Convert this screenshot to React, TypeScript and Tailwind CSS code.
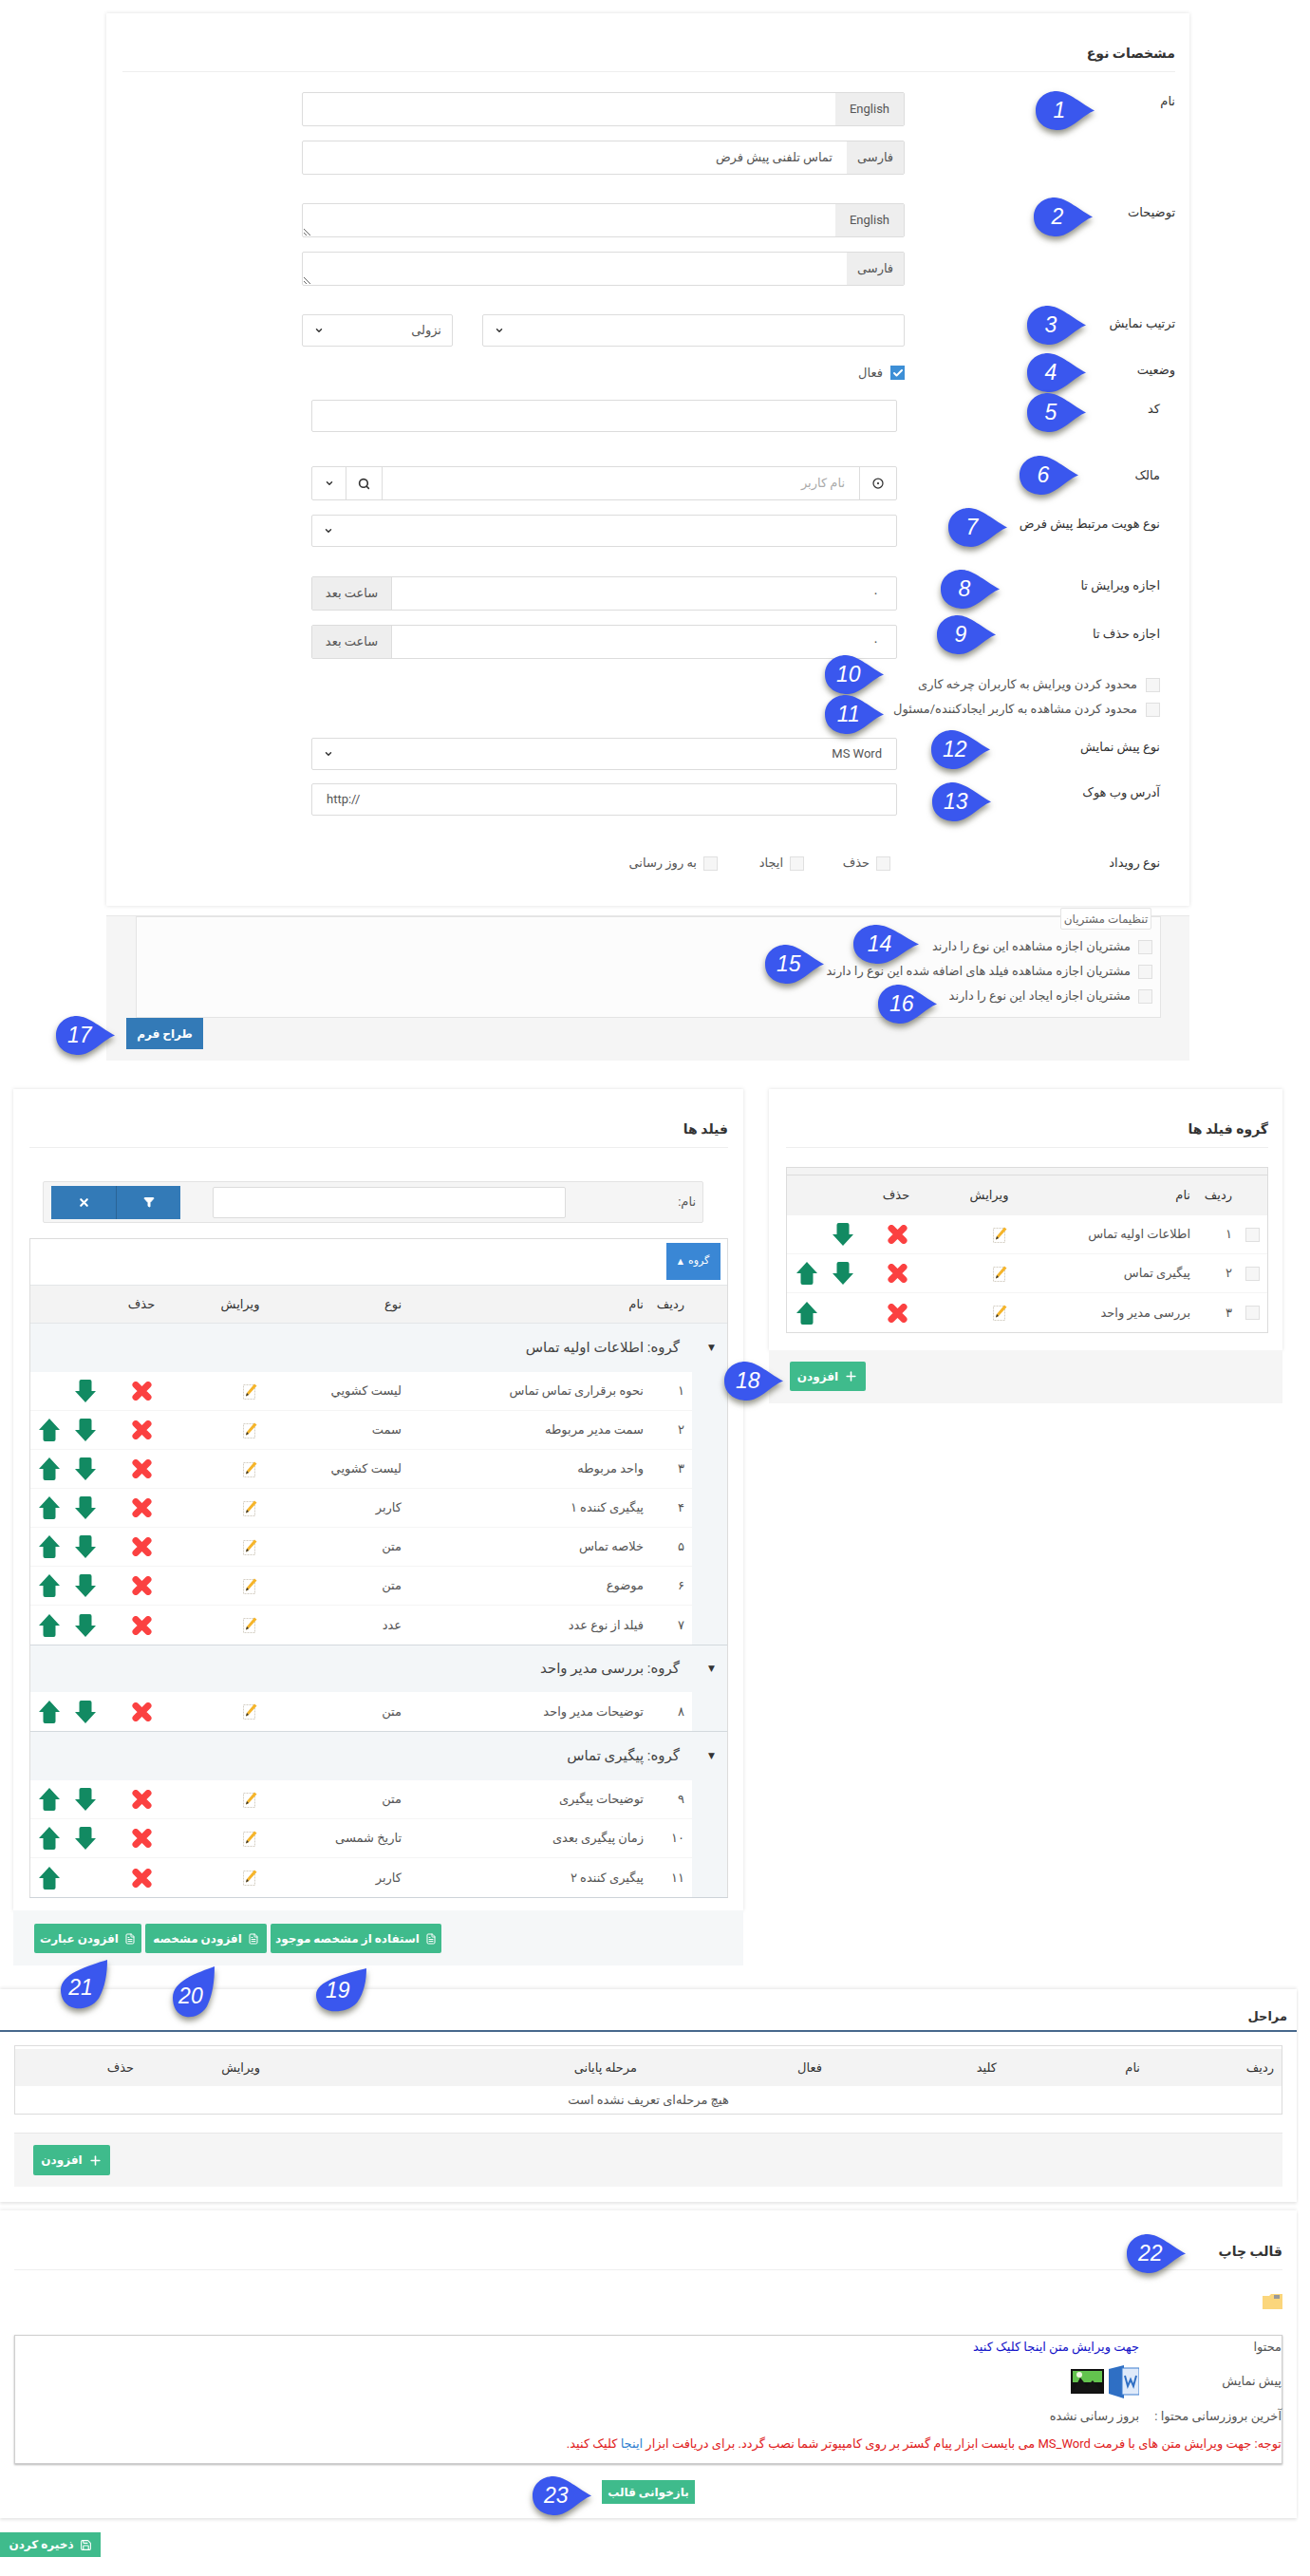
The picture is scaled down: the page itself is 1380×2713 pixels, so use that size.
import type { ReactNode } from "react";
import { ChevronDown, Search, CircleDot, Filter, X, Plus, Save, FileText, Check } from "lucide-react";

const FONT = "font-['Roboto','Noto_Sans','DejaVu_Sans',sans-serif]";

// numbered callouts, placed on top of the screenshot like annotations
const CALLOUTS: { n: number; x: number; y: number; up?: boolean; w?: number; h?: number }[] = [
  { n: 1, x: 1091, y: 96 },
  { n: 2, x: 1089, y: 208 },
  { n: 3, x: 1082, y: 322 },
  { n: 4, x: 1082, y: 372 },
  { n: 5, x: 1082, y: 414 },
  { n: 6, x: 1074, y: 480 },
  { n: 7, x: 999, y: 535 },
  { n: 8, x: 991, y: 600 },
  { n: 9, x: 987, y: 648 },
  { n: 10, x: 869, y: 690 },
  { n: 11, x: 869, y: 732 },
  { n: 12, x: 981, y: 769 },
  { n: 13, x: 982, y: 824 },
  { n: 14, x: 899, y: 974, w: 69 },
  { n: 15, x: 806, y: 995 },
  { n: 16, x: 925, y: 1037 },
  { n: 17, x: 59, y: 1070 },
  { n: 18, x: 763, y: 1434 },
  { n: 19, x: 333, y: 2073, up: true, w: 53, h: 46 },
  { n: 20, x: 182, y: 2071, up: true, w: 44, h: 54 },
  { n: 21, x: 64, y: 2064, up: true, w: 49, h: 52 },
  { n: 22, x: 1187, y: 2353 },
  { n: 23, x: 561, y: 2608 },
];

function Callout({ n, x, y, up, w, h }: { n: number; x: number; y: number; up?: boolean; w?: number; h?: number }) {
  if (up) {
    return (
      <div className="absolute" style={{ left: x, top: y, width: w, height: h }}>
        <svg viewBox="0 0 44 54" preserveAspectRatio="none" className="absolute inset-0 h-full w-full overflow-visible drop-shadow-[0_4px_3px_rgba(60,60,40,0.55)]">
          <path d="M44 0 C44 15 42 30 36 42 C30 52 20 54 14 53 C4 51 0 42 0 33 C0 24 6 18 14 13 C24 7 36 3 44 0 Z" fill="#3a57ee" />
        </svg>
        <span className="absolute bottom-[9px] left-0 w-[86%] text-center font-['Liberation_Sans',sans-serif] text-[23px] italic leading-[28px] text-white">{n}</span>
      </div>
    );
  }
  return (
    <div className="absolute h-[41px]" style={{ left: x, top: y, width: w ?? 62 }}>
      <svg viewBox="0 0 62 40" preserveAspectRatio="none" className="absolute inset-0 h-full w-full overflow-visible drop-shadow-[0_4px_3px_rgba(60,60,40,0.55)]">
        <path d="M22 0 C34 0 50 14 62 20 C50 24 38 40 24 40 C10 40 0 32 0 20 C0 8 10 0 22 0 Z" fill="#3a57ee" />
      </svg>
      <span className="absolute left-0 top-[6px] w-[80%] text-center font-['Liberation_Sans',sans-serif] text-[23px] italic leading-[28px] text-white">{n}</span>
    </div>
  );
}

function Box({ className = "", children }: { className?: string; children?: ReactNode }) {
  return <div className={`border border-[#dcdcdc] bg-white ${className}`}>{children}</div>;
}

function LangInput({ lang, value, wide }: { lang: string; value?: string; wide?: boolean }) {
  return (
    <Box className="flex h-[36px] w-full items-stretch rounded-[2px]">
      <div className={`flex items-center justify-center bg-[#eeeeee] text-[13px] text-[#555] ${wide ? "w-[72px]" : "w-[60px]"}`}>{lang}</div>
      <div className="flex flex-1 items-center px-[15px] text-[13px] text-[#555]">{value}</div>
    </Box>
  );
}

function LangArea({ lang, wide }: { lang: string; wide?: boolean }) {
  return (
    <Box className="flex h-[36px] w-full items-stretch rounded-[2px]">
      <div className={`flex items-center justify-center bg-[#eeeeee] text-[13px] text-[#555] ${wide ? "w-[72px]" : "w-[60px]"}`}>{lang}</div>
      <textarea className="h-full flex-1 outline-none" />
    </Box>
  );
}

function SelectBox({ value, narrow }: { value?: string; narrow?: boolean }) {
  return (
    <Box className={`flex h-[34px] items-center justify-between rounded-[2px] pl-[12px] text-[13px] text-[#555] ${narrow ? "w-[159px] pr-[11px]" : "pr-[15px]"}`}>
      <span>{value}</span>
      <ChevronDown size={10} strokeWidth={3.5} className="text-[#333]" />
    </Box>
  );
}

function Row({ label, labelW, fieldW, className = "", children }: { label: string; labelW: number; fieldW: number; className?: string; children: ReactNode }) {
  return (
    <div className={`flex ${className}`}>
      <div className="h-[20px] shrink-0 text-[13px] leading-[20px] text-[#333]" style={{ width: labelW }}>{label}</div>
      <div className="shrink-0" style={{ width: fieldW }}>{children}</div>
    </div>
  );
}

function Tick({ checked }: { checked?: boolean }) {
  if (checked) {
    return (
      <span className="flex h-[15px] w-[15px] shrink-0 items-center justify-center bg-[#3d8fd6]">
        <Check size={12} strokeWidth={4} className="text-white" />
      </span>
    );
  }
  return <span className="block h-[15px] w-[15px] shrink-0 border border-[#e0e0e0] bg-[#f6f6f6]" />;
}

function HourInput() {
  return (
    <Box className="flex h-[36px] items-stretch rounded-[2px]">
      <div className="flex-1 px-[18px] text-[13px] leading-[34px] text-[#555]">۰</div>
      <div className="flex w-[84px] items-center justify-center border-r border-[#ddd] bg-[#eeeeee] text-[13px] text-[#555]">ساعت بعد</div>
    </Box>
  );
}

function PanelTitle({ title }: { title: string }) {
  return (
    <div className="flex h-[62px] items-end border-b border-[#eeeeee] pb-[8px] text-[14px] font-bold leading-[22px] text-[#333]">{title}</div>
  );
}

function GreenBtn({ className = "", children }: { className?: string; children: ReactNode }) {
  return (
    <div className={`flex items-center justify-center gap-[6px] rounded-[2px] bg-[#3fbb8c] text-[12px] font-bold text-white ${className}`}>{children}</div>
  );
}

function ArrowUp() {
  return (
    <svg viewBox="0 0 22 24" className="block h-[24px] w-[22px]">
      <path d="M11 0 L22 12 L17.5 12 L17.5 22 Q17.5 24 15.5 24 L6.5 24 Q4.5 24 4.5 22 L4.5 12 L0 12 Z" fill="#128a62" />
    </svg>
  );
}

function ArrowDown() {
  return (
    <svg viewBox="0 0 22 24" className="block h-[24px] w-[22px]">
      <path d="M11 24 L22 12 L17.5 12 L17.5 2 Q17.5 0 15.5 0 L6.5 0 Q4.5 0 4.5 2 L4.5 12 L0 12 Z" fill="#128a62" />
    </svg>
  );
}

function DeleteIcon() {
  return (
    <svg viewBox="0 0 21 20" className="block h-[20px] w-[21px]">
      <path d="M4 3.5 L17 16.5 M17 3.5 L4 16.5" stroke="#fb4141" strokeWidth="7" strokeLinecap="round" />
    </svg>
  );
}

function EditIcon() {
  return (
    <svg viewBox="0 0 15 17" className="block h-[17px] w-[15px]">
      <rect x="0.5" y="1.5" width="12" height="15" fill="#fff" stroke="#d4cfc4" strokeDasharray="2 1" />
      <path d="M12 0.5 L14.5 2.5 L6 12 L3 13.5 L4 10 Z" fill="#f5b42a" />
      <path d="M3 13.5 L4 10 L6 12 Z" fill="#333" />
    </svg>
  );
}

function MoveCells({ up, down, cols }: { up: boolean; down: boolean; cols: string }) {
  return (
    <>
      <div className={`flex justify-center ${cols}`}>{down && <ArrowDown />}</div>
      <div className={`flex justify-center ${cols}`}>{up && <ArrowUp />}</div>
    </>
  );
}

const GROUPS = [
  { n: "۱", name: "اطلاعات اولیه تماس", up: false, down: true },
  { n: "۲", name: "پیگیری تماس", up: true, down: true },
  { n: "۳", name: "بررسی مدیر واحد", up: true, down: false },
];

const FIELD_GROUPS = [
  {
    title: "گروه: اطلاعات اولیه تماس",
    top: "h-[51px]",
    rows: [
      { n: "۱", name: "نحوه برقراری تماس تماس", type: "لیست کشویي", up: false, down: true },
      { n: "۲", name: "سمت مدیر مربوطه", type: "سمت", up: true, down: true },
      { n: "۳", name: "واحد مربوطه", type: "لیست کشویي", up: true, down: true },
      { n: "۴", name: "پیگیری کننده ۱", type: "کاربر", up: true, down: true },
      { n: "۵", name: "خلاصه تماس", type: "متن", up: true, down: true },
      { n: "۶", name: "موضوع", type: "متن", up: true, down: true },
      { n: "۷", name: "فیلد از نوع عدد", type: "عدد", up: true, down: true },
    ],
  },
  {
    title: "گروه: بررسی مدیر واحد",
    top: "h-[49px]",
    rows: [{ n: "۸", name: "توضیحات مدیر واحد", type: "متن", up: true, down: true }],
  },
  {
    title: "گروه: پیگیری تماس",
    top: "h-[51px]",
    rows: [
      { n: "۹", name: "توضیحات پیگیری", type: "متن", up: true, down: true },
      { n: "۱۰", name: "زمان پیگیری بعدی", type: "تاریخ شمسی", up: true, down: true },
      { n: "۱۱", name: "پیگیری کننده ۲", type: "کاربر", up: true, down: false },
    ],
  },
];

export default function App() {
  return (
    <div dir="rtl" className={`relative h-[2713px] w-[1380px] overflow-hidden bg-white text-[13px] ${FONT}`}>
      <div className="mr-[14px] w-[1366px]">
        {/* type details */}
        <div className="ml-[112px] mr-[113px] pt-[14px]">
          <div className="rounded-[1px] bg-white pb-[35px] pl-[17px] pr-[15px] shadow-[0_0_4px_rgba(0,0,0,0.13)]">
            <PanelTitle title="مشخصات نوع" />
            <Row label="نام" labelW={285} fieldW={635} className="mt-[21px]">
              <LangInput lang="English" wide />
              <div className="mt-[15px]"><LangInput lang="فارسی" value="تماس تلفنی پیش فرض" /></div>
            </Row>
            <Row label="توضیحات" labelW={285} fieldW={635} className="mt-[30px]">
              <LangArea lang="English" wide />
              <div className="mt-[15px]"><LangArea lang="فارسی" /></div>
            </Row>
            <Row label="ترتیب نمایش" labelW={285} fieldW={635} className="mt-[30px]">
              <div className="flex justify-between">
                <div className="w-[445px]"><SelectBox /></div>
                <SelectBox value="نزولی" narrow />
              </div>
            </Row>
            <Row label="وضعیت" labelW={285} fieldW={635} className="mt-[15px]">
              <div className="mt-[5px] flex h-[15px] items-center gap-[8px] text-[#555]"><Tick checked /><span>فعال</span></div>
            </Row>
            <div className="pr-[16px]">
              <Row label="کد" labelW={277} fieldW={617} className="mt-[21px]">
                <Box className="h-[34px] rounded-[2px]" />
              </Row>
              <Row label="مالک" labelW={277} fieldW={617} className="mt-[36px]">
                <Box className="flex h-[36px] items-stretch rounded-[2px]">
                  <div className="flex w-[39px] items-center justify-center border-l border-[#ddd]"><CircleDot size={12} strokeWidth={2.5} className="text-[#333]" /></div>
                  <div className="flex-1 px-[15px] text-[13px] leading-[34px] text-[#aaa]">نام کاربر</div>
                  <div className="flex w-[39px] items-center justify-center border-x border-[#ddd]"><Search size={13} strokeWidth={3} className="text-[#333]" /></div>
                  <div className="flex w-[35px] items-center justify-center"><ChevronDown size={10} strokeWidth={3.5} className="text-[#333]" /></div>
                </Box>
              </Row>
              <Row label="نوع هویت مرتبط پیش فرض" labelW={277} fieldW={617} className="mt-[15px]">
                <SelectBox />
              </Row>
              <Row label="اجازه ویرایش تا" labelW={277} fieldW={617} className="mt-[31px]">
                <HourInput />
              </Row>
              <Row label="اجازه حذف تا" labelW={277} fieldW={617} className="mt-[15px]">
                <HourInput />
              </Row>
              <div className="mt-[17px] flex h-[20px] items-center gap-[9px] text-[#555]"><Tick /><span>محدود کردن ویرایش به کاربران چرخه کاری</span></div>
              <div className="mt-[6px] flex h-[20px] items-center gap-[9px] text-[#555]"><Tick /><span>محدود کردن مشاهده به کاربر ایجادکننده/مسئول</span></div>
              <Row label="نوع پیش نمایش" labelW={277} fieldW={617} className="mt-[20px]">
                <SelectBox value="MS Word" />
              </Row>
              <Row label="آدرس وب هوک" labelW={277} fieldW={617} className="mt-[14px]">
                <Box className="h-[34px] rounded-[2px] px-[15px] text-left text-[13px] leading-[32px] text-[#555]"><span dir="ltr">http://</span></Box>
              </Row>
              <div className="mt-[40px] flex h-[20px] items-center">
                <div className="w-[284px] leading-[20px] text-[#333]">نوع رویداد</div>
                <div className="flex w-[91px] items-center gap-[7px] text-[#555]"><Tick /><span>حذف</span></div>
                <div className="flex w-[91px] items-center gap-[7px] text-[#555]"><Tick /><span>ایجاد</span></div>
                <div className="flex items-center gap-[7px] text-[#555]"><Tick /><span>به روز رسانی</span></div>
              </div>
            </div>
          </div>

          <div className="mt-[10px] h-[153px] border-t border-[#e7e7e7] bg-[#f5f5f5]">
            <div className="relative ml-[31px] mr-[30px] h-[107px] border border-[#e4e4e4] bg-[#fcfcfc] pr-[8px] pt-[18px] text-[#555]">
              <span className="absolute right-[9px] top-[-10px] flex h-[23px] w-[96px] items-center justify-center rounded-[2px] border border-[#e4e4e4] bg-white text-[12px] text-[#666]">تنظیمات مشتریان</span>
              <div className="flex h-[26px] items-center gap-[8px]"><Tick /><span>مشتریان اجازه مشاهده این نوع را دارند</span></div>
              <div className="flex h-[26px] items-center gap-[8px]"><Tick /><span>مشتریان اجازه مشاهده فیلد های اضافه شده این نوع را دارند</span></div>
              <div className="flex h-[26px] items-center gap-[8px]"><Tick /><span>مشتریان اجازه ایجاد این نوع را دارند</span></div>
            </div>
            <div className="flex justify-end pl-[21px]">
              <div className="flex h-[33px] w-[81px] items-center justify-center bg-[#337ab7] text-[12px] font-bold text-white">طراح فرم</div>
            </div>
          </div>
        </div>

        {/* field groups + fields */}
        <div className="mt-[30px] flex gap-[27px] pl-[14px] pr-[15px]">
          <div className="w-[541px] shrink-0">
            <div className="h-[275px] bg-white pl-[18px] pr-[15px] shadow-[0_0_4px_rgba(0,0,0,0.13)]">
              <PanelTitle title="گروه فیلد ها" />
              <div className="mt-[20px] border border-[#dcdcdc]">
                <div className="h-[8px] border-b border-[#dcdcdc] bg-[#f3f3f3]" />
                <div className="flex h-[42px] items-center bg-[#f3f3f3] text-[13px] text-[#333]">
                  <div className="w-[37px]" />
                  <div className="w-[44px]">ردیف</div>
                  <div className="w-[182px]">نام</div>
                  <div className="w-[60px] text-center">ویرایش</div>
                  <div className="w-[43px]" />
                  <div className="w-[50px] text-center">حذف</div>
                </div>
                {GROUPS.map((g) => (
                  <div key={g.n} className="flex h-[41px] items-center border-b border-[#f4f4f4] text-[13px] text-[#555] last:border-b-0">
                    <div className="flex w-[37px] justify-center pl-[6px]"><Tick /></div>
                    <div className="w-[44px]">{g.n}</div>
                    <div className="w-[173px]">{g.name}</div>
                    <div className="flex w-[56px] justify-center"><EditIcon /></div>
                    <div className="w-[52px]" />
                    <div className="flex w-[56px] justify-center"><DeleteIcon /></div>
                    <div className="w-[10px]" />
                    <MoveCells up={g.up} down={g.down} cols="w-[38px]" />
                  </div>
                ))}
              </div>
            </div>
            <div className="flex h-[56px] justify-end bg-[#f5f5f5] pl-[22px] pt-[12px]">
              <GreenBtn className="h-[31px] w-[80px]"><Plus size={15} strokeWidth={2.5} /><span>افزودن</span></GreenBtn>
            </div>
          </div>

          <div className="w-[769px] shrink-0">
            <div className="h-[865px] bg-white pl-[17px] pr-[16px] shadow-[0_0_4px_rgba(0,0,0,0.13)]">
              <PanelTitle title="فیلد ها" />
              <div className="ml-[14px] mr-[26px] mt-[35px] flex h-[44px] items-center rounded-[2px] border border-[#e3e3e3] bg-[#f5f5f5] pl-[8px] pr-[7px]">
                <span className="w-[137px] text-[#555]">نام:</span>
                <Box className="h-[33px] w-[372px] rounded-[2px]" />
                <div className="mr-[34px] flex h-[35px] w-[136px] bg-[#337ab7] text-white">
                  <div className="flex w-[68px] items-center justify-center border-l border-[#2a6496]"><Filter size={12} fill="currentColor" /></div>
                  <div className="flex w-[68px] items-center justify-center"><X size={13} strokeWidth={4} /></div>
                </div>
              </div>
              <div className="mt-[16px] border border-[#dcdcdc] border-b-[#cdd3d8]">
                <div className="flex h-[48px] items-start pr-[7px] pt-[4px]">
                  <div className="flex h-[39px] w-[57px] items-center justify-center gap-[5px] bg-[#3a87d5] text-[11px] text-white"><span>گروه</span><span className="text-[8px]">▲</span></div>
                </div>
                <div className="flex h-[41px] items-center border-y border-[#e3e6e8] bg-[#f3f3f3] pr-[45px] text-[13px] text-[#333]">
                  <div className="w-[43px]">ردیف</div>
                  <div className="w-[255px]">نام</div>
                  <div className="w-[134px]">نوع</div>
                  <div className="w-[72px] text-center">ویرایش</div>
                  <div className="mr-[43px] w-[50px] text-center">حذف</div>
                </div>
                {FIELD_GROUPS.map((g, i) => (
                  <div key={g.title} className={i > 0 ? "border-t border-[#d3d9dd]" : ""}>
                    <div className={`flex items-center bg-[#f3f6f8] text-[15px] text-[#444] ${g.top}`}>
                      <div className="flex w-[50px] justify-start pr-[13px] text-[9px] text-[#333]">▼</div>
                      <div>{g.title}</div>
                    </div>
                    <div className="bg-[#f3f6f8] pr-[37px]">
                      {g.rows.map((r) => (
                        <div key={r.n} className="flex h-[41px] items-center border-b border-[#f5f5f5] bg-white pr-[8px] text-[13px] text-[#555] last:border-b-0">
                          <div className="w-[43px]">{r.n}</div>
                          <div className="w-[255px]">{r.name}</div>
                          <div className="w-[134px]">{r.type}</div>
                          <div className="flex w-[52px] justify-center"><EditIcon /></div>
                          <div className="w-[63px]" />
                          <div className="flex w-[50px] justify-center"><DeleteIcon /></div>
                          <div className="w-[15px]" />
                          <MoveCells up={r.up} down={r.down} cols="w-[38px]" />
                        </div>
                      ))}
                    </div>
                  </div>
                ))}
              </div>
            </div>
            <div className="flex h-[58px] items-start justify-end gap-[4px] bg-[#f5f7f8] pl-[22px] pt-[14px]">
              <GreenBtn className="h-[31px] w-[180px]"><FileText size={12} /><span>استفاده از مشخصه موجود</span></GreenBtn>
              <GreenBtn className="h-[31px] w-[128px]"><FileText size={12} /><span>افزودن مشخصه</span></GreenBtn>
              <GreenBtn className="h-[31px] w-[113px]"><FileText size={12} /><span>افزودن عبارت</span></GreenBtn>
            </div>
          </div>
        </div>

        {/* stages */}
        <div className="mt-[25px] h-[224px] shadow-[0_-2px_3px_rgba(0,0,0,0.07),0_2px_3px_rgba(0,0,0,0.1)]">
          <div className="flex h-[45px] items-end border-b-2 border-[#47688c] pb-[5px] pr-[10px] text-[13px] font-bold text-[#333]">مراحل</div>
          <div className="mx-[15px] mt-[14px] h-[73px] border border-[#dcdcdc]">
            <div className="mt-[3px] flex h-[39px] items-center bg-[#f3f3f3] text-[13px] text-[#333]">
              <div className="w-[149px] pr-[8px]">ردیف</div>
              <div className="w-[151px]">نام</div>
              <div className="w-[184px]">کلید</div>
              <div className="w-[195px]">فعال</div>
              <div className="w-[397px]">مرحله پایانی</div>
              <div className="w-[133px]">ویرایش</div>
              <div>حذف</div>
            </div>
            <div className="flex h-[29px] items-center justify-center text-[#555]">هیچ مرحله‌ای تعریف نشده است</div>
          </div>
          <div className="mx-[15px] mt-[19px] flex h-[57px] justify-end border-t border-[#e7e7e7] bg-[#f5f5f5] pl-[20px] pt-[12px]">
            <GreenBtn className="h-[32px] w-[81px]"><Plus size={15} strokeWidth={2.5} /><span>افزودن</span></GreenBtn>
          </div>
        </div>

        {/* print template */}
        <div className="mt-[9px] h-[324px] shadow-[0_-2px_3px_rgba(0,0,0,0.05),0_2px_3px_rgba(0,0,0,0.1)]">
          <div className="mx-[15px] flex h-[63px] items-end border-b border-[#eeeeee] pb-[8px] text-[14px] font-bold text-[#333]">قالب چاپ</div>
          <div className="mr-[14px] mt-[25px]">
            <svg viewBox="0 0 23 16" className="block h-[16px] w-[23px]">
              <path d="M1 2 H8 L10 0 H22 V16 H1 Z" fill="#fbd67c" />
              <rect x="13" y="1" width="6" height="4" fill="#999" />
            </svg>
          </div>
          <div className="relative mx-[15px] mt-[27px] h-[136px] border border-[#cfcfcf] text-[13px] text-[#555] shadow-[0_1px_2px_rgba(0,0,0,0.3)]">
            <div className="flex h-[24px] items-center">
              <div className="w-[150px]">محتوا</div>
              <div className="text-[#1414c8]">جهت ویرایش متن اینجا کلیک کنید</div>
            </div>
            <div className="flex h-[48px] items-center">
              <div className="w-[150px]">پیش نمایش</div>
              <svg viewBox="0 0 72 35" className="block h-[35px] w-[72px]">
                <path d="M40 4 L56 0 V35 L40 30 Z" fill="#2f6fc4" />
                <rect x="54" y="3" width="18" height="28" fill="#dfeafa" stroke="#3f7fd0" />
                <path d="M57 11 L60 22 L63 15 L66 22 L69 11" fill="none" stroke="#2f6fc4" strokeWidth="2" />
                <rect x="0" y="4" width="35" height="26" fill="#111" />
                <rect x="2" y="6" width="31" height="12" fill="#63c34e" />
                <path d="M2 28 L10 13 L17 22 L23 16 L33 28 Z" fill="#141414" />
                <circle cx="9" cy="10" r="3" fill="#eef5e0" />
              </svg>
            </div>
            <div className="flex h-[26px] items-center">
              <div className="w-[150px]">آخرین بروزرسانی محتوا :</div>
              <div>بروز رسانی نشده</div>
            </div>
            <div className="mt-[6px] text-[#e0201c]">توجه: جهت ویرایش متن های با فرمت MS_Word می بایست ابزار پیام گستر بر روی کامپیوتر شما نصب گردد. برای دریافت ابزار <span className="text-[#2f7fd0]">اینجا</span> کلیک کنید.</div>
          </div>
          <div className="mt-[17px] flex justify-center">
            <div className="flex h-[25px] w-[98px] items-center justify-center bg-[#3fbb8c] text-[12px] font-bold text-white">بازخوانی قالب</div>
          </div>
        </div>

        <div className="mt-[15px] flex justify-end">
          <div className="flex h-[26px] w-[106px] items-center justify-center gap-[6px] bg-[#3fbb8c] text-[12px] font-bold text-white"><Save size={13} /><span>ذخیره کردن</span></div>
        </div>
      </div>

      {CALLOUTS.map((c) => (
        <Callout key={c.n} n={c.n} x={c.x} y={c.y} up={c.up} w={c.w} h={c.h} />
      ))}
    </div>
  );
}
